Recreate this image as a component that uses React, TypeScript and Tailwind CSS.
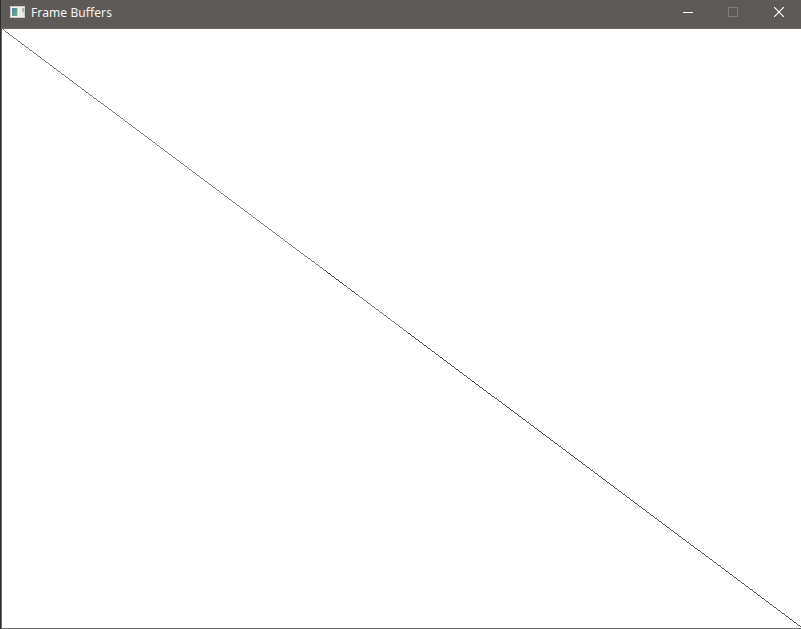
function AppIcon() {
  return (
    <svg width="15" height="12" viewBox="0 0 15 12" className="mb-px block shrink-0" shapeRendering="crispEdges">
      <defs>
        <linearGradient id="screen" x1="0" y1="0" x2="1" y2="1">
          <stop offset="0" stopColor="#5583ab" />
          <stop offset="1" stopColor="#67b07c" />
        </linearGradient>
      </defs>
      <rect width="15" height="12" fill="#c9cbcb" />
      <rect x="1" y="1" width="13" height="10" fill="#f1f3f3" />
      <rect x="2" y="2" width="5" height="8" fill="url(#screen)" />
      <rect x="7" y="2" width="1" height="8" fill="#b9cfd2" />
      <rect x="9" y="2" width="2" height="8" fill="#e6eaeb" />
      <rect x="12" y="2" width="2" height="4" fill="#a5b9ae" />
      <rect x="12" y="6" width="2" height="4" fill="#dce3df" />
    </svg>
  );
}

function TitleBar() {
  return (
    <header className="flex h-[29px] shrink-0 items-start border-b border-[#6c6865] bg-[#5e5a57]">
      <div className="flex h-[25px] flex-1 items-center pl-[9px]">
        <AppIcon />
        <h1 className="ml-[6px] whitespace-nowrap font-['Noto_Sans',sans-serif] text-[12px] leading-[25px] font-normal tracking-[0.1px] text-[#f4f4f4]">
          Frame Buffers
        </h1>
      </div>
      <div className="flex h-6">
        <button aria-label="Minimize" className="flex w-[46px] items-center justify-center">
          <svg width="10" height="10" shapeRendering="crispEdges">
            <path d="M0 5.5H10" stroke="#ffffff" />
          </svg>
        </button>
        <button aria-label="Maximize" disabled className="flex w-[44px] items-center justify-center">
          <svg width="10" height="10" shapeRendering="crispEdges">
            <rect x="0.5" y="0.5" width="9" height="9" fill="none" stroke="#7f7b78" />
          </svg>
        </button>
        <button aria-label="Close" className="flex w-[46px] items-center justify-center pl-[2px]">
          <svg width="10" height="10">
            <path d="M0.2 0.2L9.8 9.8M9.8 0.2L0.2 9.8" stroke="#ffffff" strokeWidth="1.2" />
          </svg>
        </button>
      </div>
    </header>
  );
}

export default function App() {
  return (
    <div className="flex h-[629px] w-[801px] overflow-hidden border-l border-[#2b2b2d] bg-white">
      <div className="flex min-w-0 flex-1 flex-col">
        <TitleBar />
        <main className="min-h-0 flex-1 border-b border-l border-[#6a6a6a] bg-white">
          <svg width="799" height="599" viewBox="0 0 799 599" className="block" shapeRendering="crispEdges">
            <defs>
              <linearGradient id="stroke" gradientUnits="userSpaceOnUse" x1="0" y1="0" x2="799" y2="599">
                <stop offset="0" stopColor="#5a5a5a" />
                <stop offset="0.403" stopColor="#5a5a5a" />
                <stop offset="0.406" stopColor="#1c0000" />
                <stop offset="0.425" stopColor="#200808" />
                <stop offset="0.432" stopColor="#885830" />
                <stop offset="0.438" stopColor="#2a0a05" />
                <stop offset="0.443" stopColor="#48200c" />
                <stop offset="0.446" stopColor="#5a5a5a" />
                <stop offset="0.506" stopColor="#5a5a5a" />
                <stop offset="0.508" stopColor="#242424" />
                <stop offset="1" stopColor="#2c2c2c" />
              </linearGradient>
            </defs>
            <path d="M1 0.5L799 598" stroke="url(#stroke)" strokeWidth="0.8" fill="none" />
          </svg>
        </main>
      </div>
    </div>
  );
}
